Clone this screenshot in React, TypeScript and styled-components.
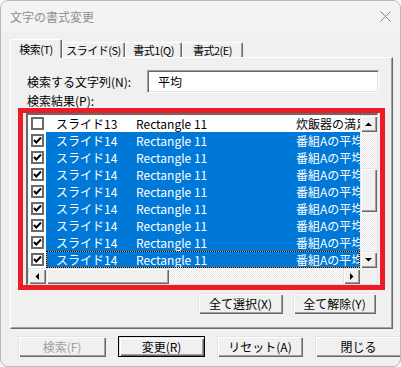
import React from 'react';
import styled, { createGlobalStyle, css } from 'styled-components';

const font = `"Noto Sans CJK JP", "Noto Sans", sans-serif`;

const GlobalStyle = createGlobalStyle`
  html, body {
    margin: 0;
    padding: 0;
    background: #f7f7f7;
  }
  body {
    font-family: ${font};
    font-size: 12px;
  }
`;

const Window = styled.div`
  width: 401px;
  height: 367px;
  box-sizing: border-box;
  border: 1px solid #b8b8b8;
  border-radius: 8px;
  overflow: hidden;
  background: #f0f0f0;
  display: flex;
  flex-direction: column;
  font-family: ${font};
  font-size: 12px;
  color: #000;
`;

const TitleBar = styled.div`
  height: 31px;
  flex: none;
  display: flex;
  align-items: center;
  justify-content: space-between;
  padding: 0 9px;
  background: #f3f3f3;
  color: #8f8f8f;
`;

const Body = styled.div`
  padding: 7px 0 0 9px;
  display: flex;
  flex-direction: column;
`;

const TabStrip = styled.div`
  height: 18px;
  display: flex;
  align-items: flex-end;
  position: relative;
  z-index: 1;
`;

const Tab = styled.div<{ $active?: boolean; $w: number }>`
  width: ${({ $w }) => $w}px;
  height: ${({ $active }) => ($active ? 19 : 15)}px;
  box-sizing: border-box;
  flex: none;
  display: flex;
  align-items: center;
  justify-content: center;
  background: #f0f0f0;
  border-top: 1px solid #fff;
  border-left: 1px solid #fff;
  border-right: 1px solid #696969;
  box-shadow: inset -1px 0 0 #a0a0a0;
  border-radius: 2px 2px 0 0;
  font-size: 11px;
  line-height: 1;
  white-space: nowrap;
  letter-spacing: -0.5px;
  ${({ $active }) =>
    $active &&
    css`
      margin-bottom: -1px;
      padding-top: 1px;
    `}
`;

const Panel = styled.div`
  width: 383px;
  height: 272px;
  box-sizing: border-box;
  border-top: 1px solid #fff;
  border-left: 1px solid #fff;
  border-right: 1px solid #696969;
  border-bottom: 1px solid #696969;
  box-shadow: inset -1px -1px 0 #a0a0a0;
  padding: 12px 7px 0 7px;
  display: flex;
  flex-direction: column;
`;

const FieldRow = styled.div`
  height: 23px;
  display: flex;
  align-items: center;
  padding: 0 6px 0 9px;
`;

const Label = styled.div`
  width: 120px;
  flex: none;
  white-space: nowrap;
`;

const TextBox = styled.div`
  flex: 1;
  height: 23px;
  box-sizing: border-box;
  background: #fff;
  border-top: 1px solid #a0a0a0;
  border-left: 1px solid #a0a0a0;
  border-right: 1px solid #fff;
  border-bottom: 1px solid #fff;
  box-shadow: inset 1px 1px 0 #696969, inset -1px -1px 0 #e3e3e3;
  padding-left: 10px;
  display: flex;
  align-items: center;
`;

const ResultLabel = styled.div`
  height: 14px;
  margin-top: 1px;
  padding-left: 9px;
  line-height: 14px;
  white-space: nowrap;
`;

const Highlight = styled.div`
  width: 367px;
  height: 182px;
  box-sizing: border-box;
  border: 5px solid #ed1c24;
  padding: 0 2px 0 3px;
`;

const ListView = styled.div`
  height: 172px;
  box-sizing: border-box;
  border-top: 2px solid #696969;
  border-left: 2px solid #696969;
  border-right: 1px solid #e3e3e3;
  border-bottom: 1px solid #e3e3e3;
  display: grid;
  grid-template-columns: 1fr 17px;
  grid-template-rows: 153px 16px;
  background: #fff;
`;

const Rows = styled.div`
  overflow: hidden;
  background: #fff;
`;

const Row = styled.div`
  height: 17px;
  display: flex;
`;

const CheckCell = styled.div`
  width: 18px;
  flex: none;
  display: flex;
  align-items: center;
  padding-left: 3px;
  box-sizing: border-box;
`;

const CheckBox = styled.div`
  width: 13px;
  height: 13px;
  box-sizing: border-box;
  border: 2px solid #6a6a6a;
  background: #fff;
  display: flex;
  align-items: center;
  justify-content: center;
`;

const Item = styled.div<{ $sel?: boolean; $focus?: boolean }>`
  flex: 1;
  display: flex;
  align-items: center;
  overflow: hidden;
  background: ${({ $sel }) => ($sel ? '#0078d7' : '#fff')};
  color: ${({ $sel }) => ($sel ? '#fff' : '#000')};
  ${({ $focus }) =>
    $focus &&
    css`
      box-shadow: inset 0 0 0 1px #e8a040;
      outline: 1px dotted #000;
      outline-offset: -1px;
    `}
`;

const Cell = styled.div<{ $w: number; $pad: number }>`
  width: ${({ $w }) => $w}px;
  flex: none;
  padding-left: ${({ $pad }) => $pad}px;
  box-sizing: border-box;
  white-space: nowrap;
  line-height: 17px;
`;

const ScrollCol = styled.div`
  display: flex;
  flex-direction: column;
`;

const ScrollRow = styled.div`
  display: flex;
`;

const bevel = css`
  background: #f0f0f0;
  box-shadow: inset 1px 1px 0 #e3e3e3, inset 2px 2px 0 #fff,
    inset -1px -1px 0 #696969, inset -2px -2px 0 #a0a0a0;
`;

const ArrowBtn = styled.div<{ $w?: number; $h?: number }>`
  ${bevel};
  width: ${({ $w }) => $w ?? 17}px;
  height: ${({ $h }) => $h ?? 17}px;
  flex: none;
  display: flex;
  align-items: center;
  justify-content: center;
`;

const Track = styled.div`
  flex: 1;
  display: flex;
  background: repeating-conic-gradient(#fff 0% 25%, #e6e6e6 0% 50%) 0 0 / 2px 2px;
`;

const VThumb = styled.div`
  ${bevel};
  width: 17px;
  height: 44px;
  margin-top: 36px;
`;

const HThumb = styled.div`
  ${bevel};
  width: 123px;
  height: 16px;
`;

const Corner = styled.div`
  background: #f0f0f0;
`;

const PanelButtons = styled.div`
  display: flex;
  justify-content: flex-end;
  gap: 10px;
  margin-top: 3px;
  padding-right: 9px;
`;

const Button = styled.div<{ $default?: boolean; $disabled?: boolean; $w?: number }>`
  width: ${({ $w }) => $w ?? 85}px;
  height: 21px;
  box-sizing: border-box;
  flex: none;
  display: flex;
  align-items: center;
  justify-content: center;
  ${bevel};
  color: ${({ $disabled }) => ($disabled ? '#a0a0a0' : '#000')};
  white-space: nowrap;
  ${({ $default }) =>
    $default &&
    css`
      border: 1px solid #000;
    `}
`;

const Footer = styled.div`
  display: flex;
  gap: 12px;
  padding: 7px 0 0 8px;
`;

const Arrow = ({ dir }: { dir: 'up' | 'down' | 'left' | 'right' }) => {
  const pts = {
    up: '0,4 7,4 3.5,0.5',
    down: '0,0 7,0 3.5,3.5',
    left: '4,0 4,7 0.5,3.5',
    right: '0,0 0,7 3.5,3.5',
  }[dir];
  const vertical = dir === 'up' || dir === 'down';
  return (
    <svg width={vertical ? 7 : 4} height={vertical ? 4 : 7} viewBox={vertical ? '0 0 7 4' : '0 0 4 7'}>
      <polygon points={pts} fill="#000" />
    </svg>
  );
};

const Check = () => (
  <svg width="9" height="9" viewBox="0 0 9 9">
    <path d="M1 4 L3.3 6.5 L8 1.5" stroke="#000" strokeWidth="2" fill="none" />
  </svg>
);

interface ListRow {
  slide: string;
  shape: string;
  text: string;
  checked: boolean;
}

const rows: ListRow[] = [
  { slide: 'スライド13', shape: 'Rectangle 11', text: '炊飯器の満足度', checked: false },
  ...Array.from({ length: 8 }, () => ({
    slide: 'スライド14',
    shape: 'Rectangle 11',
    text: '番組Aの平均視聴率',
    checked: true,
  })),
];

const tabs = [
  { label: '検索(T)', w: 52 },
  { label: 'スライド(S)', w: 63 },
  { label: '書式1(Q)', w: 57 },
  { label: '書式2(E)', w: 61 },
];

export default function App() {
  return (
    <>
      <GlobalStyle />
      <Window>
        <TitleBar>
          <span>文字の書式変更</span>
          <svg width="11" height="11" viewBox="0 0 11 11">
            <path d="M0.5 0.5 L10.5 10.5 M10.5 0.5 L0.5 10.5" stroke="#8a8a8a" strokeWidth="1" />
          </svg>
        </TitleBar>
        <Body>
          <TabStrip>
            {tabs.map((t, i) => (
              <Tab key={t.label} $w={t.w} $active={i === 0}>
                {t.label}
              </Tab>
            ))}
          </TabStrip>
          <Panel>
            <FieldRow>
              <Label>検索する文字列(N):</Label>
              <TextBox>平均</TextBox>
            </FieldRow>
            <ResultLabel>検索結果(P):</ResultLabel>
            <Highlight>
              <ListView>
                <Rows>
                  {rows.map((r, i) => (
                    <Row key={i}>
                      <CheckCell>
                        <CheckBox>{r.checked && <Check />}</CheckBox>
                      </CheckCell>
                      <Item $sel={r.checked} $focus={i === rows.length - 1}>
                        <Cell $w={84} $pad={10}>{r.slide}</Cell>
                        <Cell $w={160} $pad={6}>{r.shape}</Cell>
                        <Cell $w={200} $pad={6}>{r.text}</Cell>
                      </Item>
                    </Row>
                  ))}
                </Rows>
                <ScrollCol>
                  <ArrowBtn>
                    <Arrow dir="up" />
                  </ArrowBtn>
                  <Track>
                    <VThumb />
                  </Track>
                  <ArrowBtn>
                    <Arrow dir="down" />
                  </ArrowBtn>
                </ScrollCol>
                <ScrollRow>
                  <ArrowBtn $h={16} $w={18}>
                    <Arrow dir="left" />
                  </ArrowBtn>
                  <Track>
                    <HThumb />
                  </Track>
                  <ArrowBtn $h={16}>
                    <Arrow dir="right" />
                  </ArrowBtn>
                </ScrollRow>
                <Corner />
              </ListView>
            </Highlight>
            <PanelButtons>
              <Button>全て選択(X)</Button>
              <Button $w={83}>全て解除(Y)</Button>
            </PanelButtons>
          </Panel>
          <Footer>
            <Button $w={88} $disabled>検索(F)</Button>
            <Button $w={87} $default>変更(R)</Button>
            <Button $w={86}>リセット(A)</Button>
            <Button $w={87}>閉じる</Button>
          </Footer>
        </Body>
      </Window>
    </>
  );
}
